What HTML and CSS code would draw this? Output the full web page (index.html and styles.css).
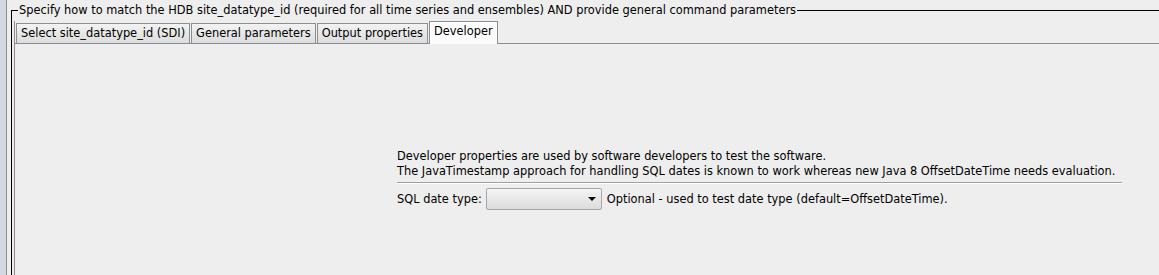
FILE: index.html
```html
<!DOCTYPE html>
<html lang="en">
<head>
    <meta charset="UTF-8">
    <title>HDB command parameters</title>
    <link rel="stylesheet" href="styles.css">
</head>
<body>
    <div class="window">
        <div class="edge"></div>
        <fieldset class="group">
            <legend>Specify how to match the HDB site_datatype_id (required for all time series and ensembles) AND provide general command parameters</legend>
            <div class="tabs">
                <div class="tab">Select site_datatype_id (SDI)</div>
                <div class="tab">General parameters</div>
                <div class="tab">Output properties</div>
                <div class="tab selected">Developer</div>
            </div>
            <div class="pane">
                <div class="dev">
                    <p>Developer properties are used by software developers to test the software.</p>
                    <p>The JavaTimestamp approach for handling SQL dates is known to work whereas new Java 8 OffsetDateTime needs evaluation.</p>
                    <div class="separator"></div>
                    <div class="row">
                        <span>SQL date type:</span>
                        <div class="combo">
                            <span class="arrow"></span>
                        </div>
                        <span>Optional - used to test date type (default=OffsetDateTime).</span>
                    </div>
                </div>
            </div>
        </fieldset>
    </div>
</body>
</html>
```

FILE: styles.css
```css
* {
    box-sizing: border-box;
}

body {
    margin: 0;
    overflow: hidden;
    height: 100vh;
    background: #eeeeee;
    font-family: "DejaVu Sans", Tahoma, sans-serif;
    font-size: 11.4px;
    color: #000;
}

/* the window continues below the visible area */
.window {
    display: flex;
    height: 320px;
}

.edge {
    width: 7px;
    background: #d3d8e0;
    border-right: 1px solid #8c8c8c;
}

.group {
    flex: 1;
    margin: 3px 0 0 4px;
    padding: 4px 0 0 2px;
    border: 1px solid #000;
    border-right: none;
    min-width: 0;
}

.group legend {
    margin-left: 4px;
    padding: 0 1px;
    line-height: 14px;
    white-space: nowrap;
}

.tabs {
    display: flex;
    align-items: flex-end;
    gap: 1px;
    height: 23px;
    padding-left: 1px;
    border-left: 1px solid #8c8c8c;
    border-bottom: 1px solid #898c95;
}

.tab {
    height: 20px;
    padding: 0 4px;
    line-height: 19px;
    border: 1px solid #8e8f8f;
    border-bottom: none;
    background: linear-gradient(#f3f3f3, #dcdcdc);
    white-space: nowrap;
}

.tab.selected {
    height: 23px;
    margin-bottom: -1px;
    padding-bottom: 3px;
    background: #fcfcfc;
    border-color: #8c8e94;
}

.pane {
    height: 280px;
    padding: 105px 0 0 382px;
    border-left: 1px solid #8c8c8c;
}

.dev p {
    margin: 0;
    line-height: 15px;
    white-space: nowrap;
}

.separator {
    width: 725px;
    margin-top: 3px;
    border-top: 1px solid #a0a0a0;
    border-bottom: 1px solid #fff;
}

.row {
    display: flex;
    align-items: center;
    gap: 4px;
    margin-top: 4px;
}

.combo {
    position: relative;
    width: 116px;
    height: 22px;
    margin-right: 1px;
    border: 1px solid #a6a6a6;
    border-radius: 2px;
    background: linear-gradient(#f4f4f4, #dcdcdc);
}

.arrow {
    position: absolute;
    right: 5px;
    top: 8px;
    border-left: 4px solid transparent;
    border-right: 4px solid transparent;
    border-top: 4px solid #000;
}
```
